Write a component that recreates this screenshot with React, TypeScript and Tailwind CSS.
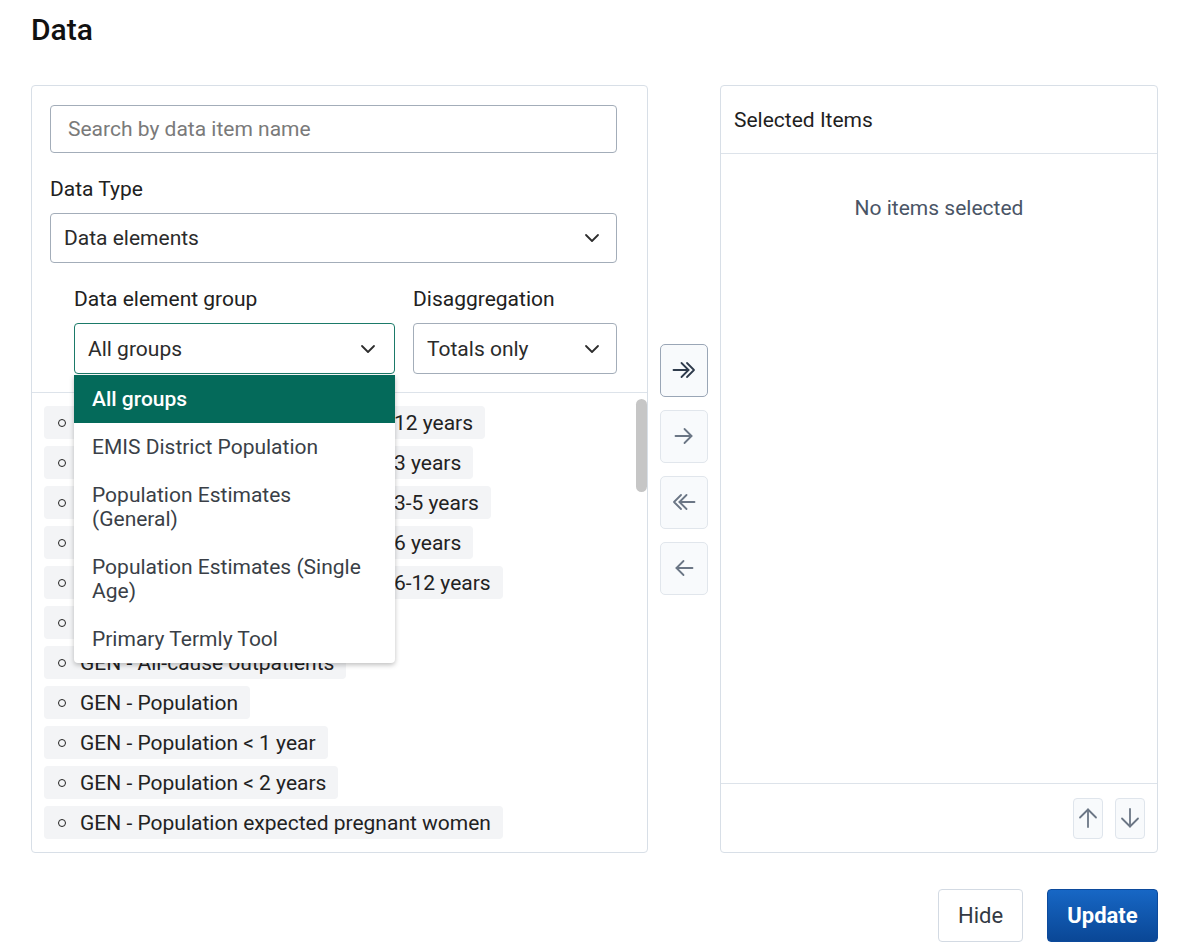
import { useState } from 'react';

const groups = [
  'All groups',
  'EMIS District Population',
  'Population Estimates (General)',
  'Population Estimates (Single Age)',
  'Primary Termly Tool',
];

const items = [
  'EMIS - Population of children age 12 years',
  'EMIS - Population of children age 3 years',
  'EMIS - Population of children age 3-5 years',
  'EMIS - Population of children age 6 years',
  'EMIS - Population of children age 6-12 years',
  'GEN - All-cause admissions',
  'GEN - All-cause outpatients',
  'GEN - Population',
  'GEN - Population < 1 year',
  'GEN - Population < 2 years',
  'GEN - Population expected pregnant women',
  'GEN - Population expected deliveries',
  'GEN - Population women 15-49 years',
  'GEN - Population 0-59 months',
  'GEN - Population 5-14 years',
  'GEN - Population 15+ years',
  'GEN - Population female',
  'GEN - Population male',
  'GEN - Population urban',
  'GEN - Population rural',
  'POP - Single age 0',
  'POP - Single age 1',
  'POP - Single age 2',
  'POP - Single age 3',
  'POP - Single age 4',
  'POP - Single age 5',
  'POP - Single age 6',
  'POP - Single age 7',
  'POP - Single age 8',
  'POP - Single age 9',
  'POP - Single age 10',
  'POP - Single age 11',
  'POP - Single age 12',
  'POP - Single age 13',
  'POP - Single age 14',
  'PTT - Enrolment P1',
  'PTT - Enrolment P2',
  'PTT - Enrolment P3',
  'PTT - Enrolment P4',
  'PTT - Enrolment P5',
  'PTT - Enrolment P6',
  'PTT - Enrolment P7',
  'PTT - Teachers present',
  'PTT - Teachers on payroll',
  'PTT - Classrooms',
  'PTT - Latrine stances',
  'PTT - Pupils with textbooks',
  'PTT - Pupils absent',
  'PTT - School feeding days',
  'PTT - Term days',
  'PTT - Inspection visits',
  'PTT - SMC meetings held',
  'PTT - Learners with disability',
];

function Chevron() {
  return (
    <svg width="24" height="24" viewBox="0 0 24 24" fill="none">
      <path d="M6 9l6 6 6-6" stroke="#2d2d2d" strokeWidth="1.8" strokeLinecap="round" strokeLinejoin="round" />
    </svg>
  );
}

function Arrow({ dir, double, color }: { dir: 'left' | 'right'; double?: boolean; color: string }) {
  const flip = dir === 'left' ? 'scale(-1,1) translate(-24,0)' : undefined;
  return (
    <svg width="24" height="18" viewBox="0 0 24 18" fill="none">
      <g transform={flip} stroke={color} strokeWidth="1.8" strokeLinecap="round" strokeLinejoin="round">
        {double ? (
          <>
            <path d="M1.5 9h15" />
            <path d="M9.5 2l7 7-7 7" />
            <path d="M15 2l7 7-7 7" />
          </>
        ) : (
          <>
            <path d="M3.5 9h16" />
            <path d="M12.5 2l7 7-7 7" />
          </>
        )}
      </g>
    </svg>
  );
}

function VArrow({ up }: { up?: boolean }) {
  return (
    <svg width="22" height="22" viewBox="0 0 22 22" fill="none">
      <g transform={up ? undefined : 'rotate(180 11 11)'} stroke="#6b7685" strokeWidth="1.8" strokeLinecap="round" strokeLinejoin="round">
        <path d="M11 20V2.5" />
        <path d="M3 10.5l8-8 8 8" />
      </g>
    </svg>
  );
}

export default function App() {
  const [group, setGroup] = useState('All groups');
  const [open, setOpen] = useState(true);

  return (
    <div className="bg-white font-['Roboto',sans-serif] text-[21px] leading-[24px] text-[#212121] pl-[31px] pr-[29px] pt-[12px] pb-[9px]">
      <h1 className="text-[30px] leading-[36px] font-medium text-[#111]">Data</h1>

      <div className="mt-[37px] flex">
        {/* source panel */}
        <div className="w-[617px] h-[768px] border border-[#d8dfe7] rounded-[4px] flex flex-col">
          <div className="pl-[18px] pr-[30px] pt-[19px] pb-[18px] border-b border-[#dde3ea]">
            <input
              placeholder="Search by data item name"
              className="w-full h-[48px] px-[17px] border border-[#a3adb9] rounded-[4px] outline-none placeholder:text-[#7a7a7a]"
            />
            <div className="mt-[24px]">Data Type</div>
            <div className="mt-[12px] h-[50px] border border-[#a3adb9] rounded-[4px] flex items-center justify-between pl-[13px] pr-[12px] text-[#2b2b2b]">
              <span>Data elements</span>
              <Chevron />
            </div>
            <div className="mt-[24px] pl-[24px] flex gap-[18px]">
              <div className="w-[321px] relative">
                <div>Data element group</div>
                <button
                  onClick={() => setOpen((o) => !o)}
                  className="mt-[12px] w-full h-[51px] border border-[#1b7a69] rounded-[4px] flex items-center justify-between pl-[13px] pr-[14px] text-[#2b2b2b]"
                >
                  <span>{group}</span>
                  <Chevron />
                </button>
                {open && (
                  <div className="absolute left-0 right-0 top-full mt-[1px] z-10 bg-white rounded-b-[4px] shadow-[0_2px_5px_rgba(0,0,0,0.25)] overflow-hidden">
                    {groups.map((g) => (
                      <div
                        key={g}
                        onClick={() => {
                          setGroup(g);
                          setOpen(false);
                        }}
                        className={
                          g === group
                            ? 'px-[18px] py-[12px] bg-[#046a5a] text-white font-medium'
                            : 'px-[18px] py-[12px] text-[#3a3f47]'
                        }
                      >
                        {g}
                      </div>
                    ))}
                  </div>
                )}
              </div>
              <div className="w-[204px]">
                <div>Disaggregation</div>
                <div className="mt-[12px] h-[51px] border border-[#a3adb9] rounded-[4px] flex items-center justify-between pl-[13px] pr-[12px] text-[#2b2b2b]">
                  <span>Totals only</span>
                  <Chevron />
                </div>
              </div>
            </div>
          </div>

          <div className="flex-1 min-h-0 py-[6px] flex flex-col relative">
            <div className="flex-1 min-h-0 overflow-y-auto pl-[12px] pt-[7px] [scrollbar-width:none]">
              <div className="flex flex-col items-start gap-[7px] pb-[7px]">
                {items.map((it) => (
                  <div
                    key={it}
                    className="h-[33px] flex items-center gap-[14px] pl-[14px] pr-[12px] bg-[#f3f4f6] rounded-[4px] text-[#222] whitespace-nowrap"
                  >
                    <span className="w-[8px] h-[8px] rounded-full border-[1.5px] border-[#222] shrink-0" />
                    <span>{it}</span>
                  </div>
                ))}
              </div>
            </div>
            {/* scroll thumb */}
            <div className="absolute right-0 top-[6px] w-[11px] h-[93px] rounded-full bg-[#c6c6c6]" />
          </div>
        </div>

        {/* transfer buttons */}
        <div className="mx-[12px] w-[48px] flex flex-col justify-center gap-[13px]">
          <button className="h-[53px] rounded-[5px] border border-[#9aa6b6] bg-[#f8fafc] flex items-center justify-center">
            <Arrow dir="right" double color="#2f3b4c" />
          </button>
          <button className="h-[53px] rounded-[5px] border border-[#e1e6ec] bg-[#f8fafc] flex items-center justify-center">
            <Arrow dir="right" color="#6b7685" />
          </button>
          <button className="h-[53px] rounded-[5px] border border-[#e1e6ec] bg-[#f8fafc] flex items-center justify-center">
            <Arrow dir="left" double color="#6b7685" />
          </button>
          <button className="h-[53px] rounded-[5px] border border-[#e1e6ec] bg-[#f8fafc] flex items-center justify-center">
            <Arrow dir="left" color="#6b7685" />
          </button>
        </div>

        {/* selected panel */}
        <div className="w-[438px] h-[768px] border border-[#d8dfe7] rounded-[4px] flex flex-col">
          <div className="h-[68px] border-b border-[#dde3ea] flex items-center px-[13px] text-[#1f1f1f]">
            Selected Items
          </div>
          <div className="flex-1 pt-[42px] text-center text-[#4a5566]">No items selected</div>
          <div className="h-[69px] border-t border-[#dde3ea] flex items-center justify-end gap-[12px] pr-[12px]">
            <button className="w-[30px] h-[41px] rounded-[4px] border border-[#dfe5ec] bg-[#f8fafc] flex items-center justify-center">
              <VArrow up />
            </button>
            <button className="w-[30px] h-[41px] rounded-[4px] border border-[#dfe5ec] bg-[#f8fafc] flex items-center justify-center">
              <VArrow />
            </button>
          </div>
        </div>
      </div>

      <div className="mt-[36px] flex justify-end gap-[24px]">
        <button className="w-[85px] h-[53px] rounded-[4px] border border-[#d3dae3] bg-white text-[22px] text-[#333a44]">
          Hide
        </button>
        <button className="w-[111px] h-[53px] rounded-[4px] border border-[#0c4a9c] bg-linear-to-b from-[#1767c5] to-[#0a4796] text-[22px] text-white font-bold">
          Update
        </button>
      </div>
    </div>
  );
}
